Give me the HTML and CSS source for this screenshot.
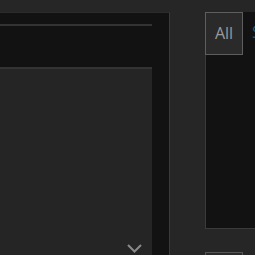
FILE: index.html
```html
<!DOCTYPE html>
<html>
<head>
<meta charset="utf-8">
<link rel="stylesheet" href="styles.css">
</head>
<body>
<div class="page">
  <div class="left">
    <div class="list">
      <div class="list-head"></div>
      <div class="list-body">
        <div class="chevron">
          <svg width="15" height="9" viewBox="0 0 15 9"><path d="M1 1 L7.5 7.5 L14 1" fill="none" stroke="#8a8a8a" stroke-width="2"/></svg>
        </div>
      </div>
    </div>
  </div>
  <div class="right">
    <div class="tabs">
      <div class="tab active">All</div>
      <div class="tab other">S</div>
    </div>
    <div class="panel"></div>
    <div class="bottom">
      <div class="chip"></div>
    </div>
  </div>
</div>
</body>
</html>
```

FILE: styles.css
```css
html, body {
  margin: 0;
  padding: 0;
  background: #262626;
  overflow: hidden;
  width: 255px;
  height: 255px;
}
.page {
  display: flex;
  align-items: flex-start;
  padding-top: 12px;
  height: 243px;
  gap: 35px;
}
.left {
  width: 170px;
  height: 243px;
  background: #121212;
  border-right: 1px solid #3a3a3a;
  border-top: 1px solid #2c2c2c;
  box-sizing: border-box;
  padding-top: 11px;
  flex: none;
}
.list {
  width: 152px;
  height: 100%;
  display: flex;
  flex-direction: column;
}
.list-head {
  height: 41px;
  border-top: 2px solid #333333;
  border-bottom: 2px solid #333333;
  background: #121212;
  flex: none;
}
.list-body {
  flex: 1;
  background: #252525;
  display: flex;
  align-items: flex-end;
  justify-content: flex-end;
  padding-right: 10px;
  padding-bottom: 2px;
}
.chevron {
  display: flex;
}
.right {
  flex: 1;
  display: flex;
  flex-direction: column;
  min-width: 0;
}
.tabs {
  display: flex;
  height: 43px;
  background: #121212;
}
.tab {
  font-family: "Open Sans", "Liberation Sans", sans-serif;
  font-size: 16px;
  line-height: 41px;
  box-sizing: border-box;
  height: 43px;
}
.tab.active {
  width: 38px;
  border: 1px solid #5e5e5e;
  background: #2a2a2a;
  color: #9a9a9a;
  text-align: center;
  flex: none;
}
.tab.other {
  color: #1e5a8a;
  padding-left: 9px;
  flex: none;
}
.panel {
  height: 173px;
  background: #121212;
  border-left: 1px solid #3a3a3a;
  border-bottom: 1px solid #3a3a3a;
}
.bottom {
  padding-top: 23px;
  display: flex;
}
.chip {
  width: 38px;
  height: 20px;
  box-sizing: border-box;
  border: 1px solid #555555;
  background: #2a2a2a;
}
```
